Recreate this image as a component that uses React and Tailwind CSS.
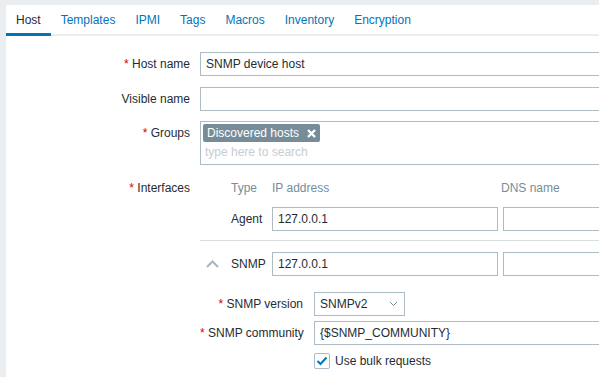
import React from 'react';

const tabs = ['Host', 'Templates', 'IPMI', 'Tags', 'Macros', 'Inventory', 'Encryption'];

function Req() {
    return <span className="text-[#d40000]">* </span>;
}

function FormRow({ label, required, className = '', children }) {
    return (
        <div className={`flex items-start ${className}`}>
            <div className="w-[184px] shrink-0 h-[24px] leading-[24px] text-right whitespace-nowrap">
                {required && <Req />}
                {label}
            </div>
            <div className="ml-[10px]">{children}</div>
        </div>
    );
}

function TextBox({ value, className = 'w-[453px]' }) {
    return (
        <div className={`h-[24px] border border-[#acbbc4] bg-white px-[5px] leading-[22px] whitespace-nowrap ${className}`}>
            {value}
        </div>
    );
}

export default function App() {
    return (
        <div className="w-[599px] h-[377px] overflow-hidden bg-[#ebeef0] pt-[5px] pl-[6px] font-['Liberation_Sans',Arial,sans-serif] text-[12px] text-[#1f2c33]">
            <div className="w-[800px] h-full bg-white">
                {/* Tabs */}
                <div className="flex h-[31px] border-b-2 border-[#ebeef0]">
                    {tabs.map((t, i) => (
                        <div
                            key={t}
                            className={
                                i === 0
                                    ? 'px-[10px] pt-[2px] flex items-center border-b-[3px] border-[#0275b8] -mb-[2px] text-[#1f2c33]'
                                    : 'px-[10px] pt-[1px] flex items-center text-[#0275b8]'
                            }
                        >
                            {t}
                        </div>
                    ))}
                </div>

                {/* Form */}
                <div className="pt-[16px]">
                    <FormRow label="Host name" required>
                        <TextBox value="SNMP device host" />
                    </FormRow>

                    <FormRow label="Visible name" className="mt-[11px]">
                        <TextBox value="" />
                    </FormRow>

                    <FormRow label="Groups" required className="mt-[10px]">
                        <div className="w-[453px] h-[44px] border border-[#acbbc4] p-[2px]">
                            <div className="inline-flex items-center h-[18px] bg-[#768d99] text-white rounded-[2px] pl-[4px] pr-[4px]">
                                <span>Discovered hosts</span>
                                <svg width="9" height="9" viewBox="0 0 9 9" className="ml-[8px]">
                                    <path d="M1 1 L8 8 M8 1 L1 8" stroke="#ffffff" strokeWidth="2.4" />
                                </svg>
                            </div>
                            <div className="h-[20px] leading-[20px] pl-[2px] text-[#c5ced3]">type here to search</div>
                        </div>
                    </FormRow>

                    <FormRow label="Interfaces" required className="mt-[11px]">
                        <div className="w-[600px]">
                            {/* header */}
                            <div className="flex h-[24px] items-center text-[#768d99]">
                                <div className="w-[31px]" />
                                <div className="w-[41px]">Type</div>
                                <div className="w-[226px]">IP address</div>
                                <div className="ml-[3px]">DNS name</div>
                            </div>

                            {/* Agent */}
                            <div className="flex items-center mt-[7px]">
                                <div className="w-[31px]" />
                                <div className="w-[41px]">Agent</div>
                                <TextBox value="127.0.0.1" className="w-[226px]" />
                                <TextBox value="" className="w-[200px] ml-[5px]" />
                            </div>

                            <div className="h-px bg-[#d9dee1] mt-[9px]" />

                            {/* SNMP */}
                            <div className="flex items-center mt-[11px]">
                                <div className="w-[31px] flex justify-center pr-[6px]">
                                    <svg width="13" height="8" viewBox="0 0 13 8">
                                        <path d="M1 7 L6.5 1.5 L12 7" fill="none" stroke="#aab6bd" strokeWidth="2" />
                                    </svg>
                                </div>
                                <div className="w-[41px]">SNMP</div>
                                <TextBox value="127.0.0.1" className="w-[226px]" />
                                <TextBox value="" className="w-[200px] ml-[5px]" />
                            </div>

                            {/* SNMP details */}
                            <div className="mt-[16px]">
                                <div className="flex items-center">
                                    <div className="w-[103px] text-right whitespace-nowrap">
                                        <Req />SNMP version
                                    </div>
                                    <div className="ml-[11px] w-[91px] h-[24px] border border-[#acbbc4] px-[5px] flex items-center justify-between">
                                        <span>SNMPv2</span>
                                        <svg width="9" height="6" viewBox="0 0 9 6" className="mr-[1px]">
                                            <path d="M1 1 L4.5 4.5 L8 1" fill="none" stroke="#768d99" strokeWidth="1" />
                                        </svg>
                                    </div>
                                </div>
                                <div className="flex items-center mt-[5px]">
                                    <div className="w-[103px] text-right whitespace-nowrap">
                                        <Req />SNMP community
                                    </div>
                                    <TextBox value="{$SNMP_COMMUNITY}" className="ml-[11px] w-[300px]" />
                                </div>
                                <div className="flex items-center h-[24px] mt-[4px] pl-[114px]">
                                    <div className="w-[16px] h-[16px] border border-[#acbbc4] rounded-[2px] flex items-center justify-center">
                                        <svg width="12" height="10" viewBox="0 0 12 10">
                                            <path d="M1.5 5 L4.5 8 L10.5 1.5" fill="none" stroke="#0275b8" strokeWidth="2" />
                                        </svg>
                                    </div>
                                    <span className="ml-[5px]">Use bulk requests</span>
                                </div>
                            </div>
                        </div>
                    </FormRow>
                </div>
            </div>
        </div>
    );
}
